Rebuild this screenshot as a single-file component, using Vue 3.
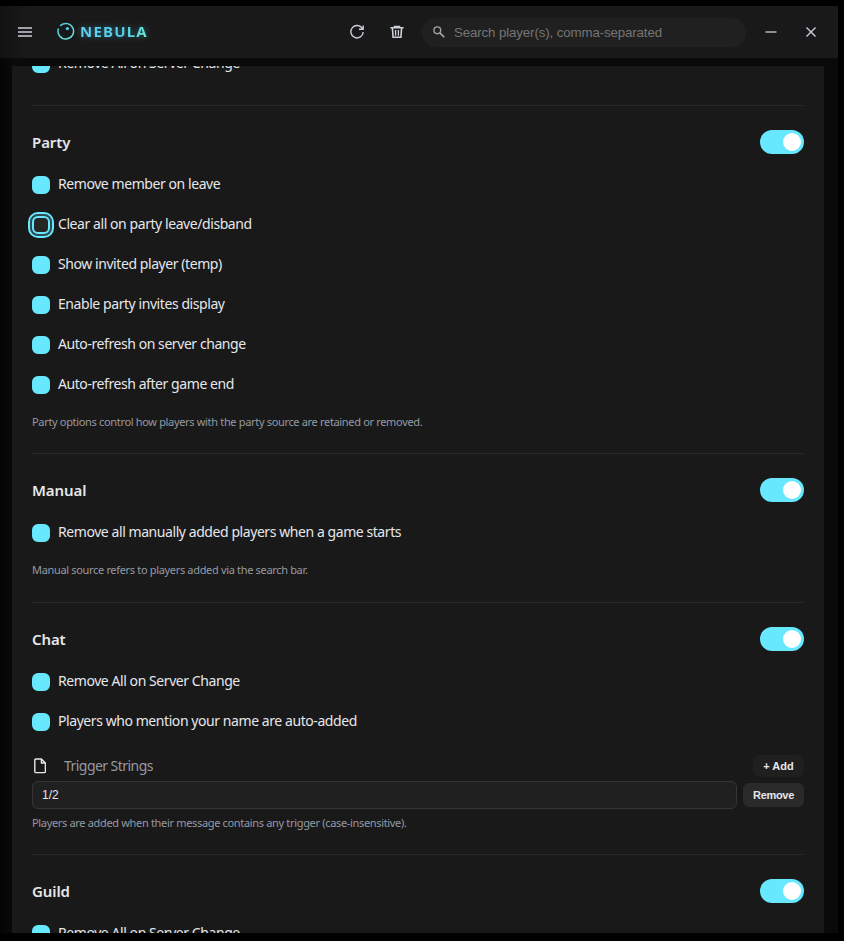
<template>
  <div class="window">
    <header class="titlebar">
      <button class="icon-btn menu-btn" type="button" aria-label="Menu">
        <svg width="14" height="10" viewBox="0 0 14 10">
          <path d="M0 1h14M0 5h14M0 9h14" stroke="currentColor" stroke-width="1.7" />
        </svg>
      </button>

      <div class="brand">
        <svg class="brand-logo" width="18" height="18" viewBox="0 0 18 18" fill="none">
          <defs>
            <linearGradient id="logo-gradient" x1="0" y1="0" x2="1" y2="1">
              <stop offset="0" stop-color="#4fc3e8" />
              <stop offset="1" stop-color="#6ee7d8" />
            </linearGradient>
          </defs>
          <path
            d="M3.6 3.4A7.8 7.8 0 1 1 1.3 7"
            stroke="url(#logo-gradient)"
            stroke-width="1.5"
            stroke-linecap="round"
          />
          <circle cx="10.4" cy="6.6" r="1.7" fill="#4fc3e8" />
        </svg>
        <span class="brand-name">NEBULA</span>
      </div>

      <button class="icon-btn refresh-btn" type="button" aria-label="Refresh">
        <svg width="16" height="16" viewBox="0 0 16 16" fill="none" stroke="currentColor">
          <path
            d="M13.6 5A6.2 6.2 0 1 0 14.2 8M14.2 1.6V5.3H10"
            stroke-width="1.4"
            stroke-linejoin="round"
          />
        </svg>
      </button>
      <button class="icon-btn trash-btn" type="button" aria-label="Clear">
        <svg width="14" height="14" viewBox="0 0 14 14" fill="none" stroke="currentColor">
          <path d="M.4 2.8h13.2M4.6 2.6V1.5h4.8v1.1M2.4 3l.7 9.3h7.8l.7-9.3" stroke-width="1.6" />
          <path d="M5.6 5v5.8M8.4 5v5.8" stroke-width="1.3" />
        </svg>
      </button>

      <label class="search">
        <svg width="12" height="12" viewBox="0 0 12 12" fill="none" stroke="currentColor">
          <circle cx="4.3" cy="4.3" r="3.4" stroke-width="1.4" />
          <path d="M6.9 6.9L11.2 11.2" stroke-width="1.7" />
        </svg>
        <input v-model="search" type="text" placeholder="Search player(s), comma-separated" />
      </label>

      <button class="icon-btn minimize-btn" type="button" aria-label="Minimize">
        <svg width="12" height="12" viewBox="0 0 12 12">
          <path d="M.5 6h11" stroke="currentColor" stroke-width="1.8" />
        </svg>
      </button>
      <button class="icon-btn close-btn" type="button" aria-label="Close">
        <svg width="10" height="10" viewBox="0 0 10 10">
          <path d="M.5 .5l9 9M9.5 .5l-9 9" stroke="currentColor" stroke-width="1.4" />
        </svg>
      </button>
    </header>

    <main class="panel">
      <section v-for="section in sections" :key="section.id" class="section">
        <div v-if="section.title" class="section-head">
          <h3>{{ section.title }}</h3>
          <button
            class="toggle"
            :class="{ on: section.enabled }"
            type="button"
            role="switch"
            :aria-checked="section.enabled"
            :aria-label="section.title"
            @click="section.enabled = !section.enabled"
          >
            <span class="toggle-knob"></span>
          </button>
        </div>

        <label v-for="option in section.options" :key="option.label" class="option">
          <input
            v-model="option.checked"
            type="checkbox"
            :class="{ focused: focusedOption === option.label }"
            @focus="focusedOption = option.label"
            @blur="focusedOption = ''"
          />
          <span>{{ option.label }}</span>
        </label>

        <div v-if="section.triggers" class="triggers">
          <div class="triggers-head">
            <svg width="12" height="16" viewBox="0 0 12 16" fill="none" stroke="currentColor">
              <path
                d="M7.4 1H2Q.8 1 .8 2.2V13.4Q.8 14.6 2 14.6H10.2Q11.4 14.6 11.4 13.4V5L7.4 1V5H11.4"
                stroke-width="1.4"
                stroke-linejoin="round"
              />
            </svg>
            <span class="triggers-title">Trigger Strings</span>
            <button class="small-btn add-btn" type="button" @click="section.triggers.push('')">
              + Add
            </button>
          </div>
          <div v-for="(trigger, index) in section.triggers" :key="index" class="trigger-row">
            <input v-model="section.triggers[index]" type="text" />
            <button
              class="small-btn remove-btn"
              type="button"
              @click="section.triggers.splice(index, 1)"
            >
              Remove
            </button>
          </div>
        </div>

        <p v-if="section.note" class="note">{{ section.note }}</p>
      </section>
    </main>
  </div>
</template>

<script setup>
import { ref } from 'vue'

const search = ref('')
const focusedOption = ref('Clear all on party leave/disband')

const sections = ref([
  {
    id: 'server',
    options: [{ label: 'Remove All on Server Change', checked: true }],
  },
  {
    id: 'party',
    title: 'Party',
    enabled: true,
    options: [
      { label: 'Remove member on leave', checked: true },
      { label: 'Clear all on party leave/disband', checked: false },
      { label: 'Show invited player (temp)', checked: true },
      { label: 'Enable party invites display', checked: true },
      { label: 'Auto-refresh on server change', checked: true },
      { label: 'Auto-refresh after game end', checked: true },
    ],
    note: 'Party options control how players with the party source are retained or removed.',
  },
  {
    id: 'manual',
    title: 'Manual',
    enabled: true,
    options: [{ label: 'Remove all manually added players when a game starts', checked: true }],
    note: 'Manual source refers to players added via the search bar.',
  },
  {
    id: 'chat',
    title: 'Chat',
    enabled: true,
    options: [
      { label: 'Remove All on Server Change', checked: true },
      { label: 'Players who mention your name are auto-added', checked: true },
    ],
    triggers: ['1/2'],
    note: 'Players are added when their message contains any trigger (case-insensitive).',
  },
  {
    id: 'guild',
    title: 'Guild',
    enabled: true,
    options: [{ label: 'Remove All on Server Change', checked: true }],
  },
])
</script>

<style>
body {
  background: #000;
}
</style>

<style scoped>
.window {
  box-sizing: border-box;
  width: 838px;
  height: 933px;
  border-top: 6px solid #000;
  background: linear-gradient(to right, #040404, #0a0a0a 14px);
  display: flex;
  flex-direction: column;
  font-family: 'Noto Sans', sans-serif;
  color: #e5e7eb;
  overflow: hidden;
}

button,
input {
  font-family: inherit;
  border: none;
  outline: none;
  margin: 0;
  padding: 0;
}

.titlebar {
  display: flex;
  align-items: center;
  flex: none;
  height: 52px;
  background: linear-gradient(to right, #121212, #191919 28px);
}

.icon-btn {
  display: flex;
  align-items: center;
  justify-content: center;
  flex: none;
  width: 32px;
  height: 32px;
  background: none;
  color: #cbd0da;
  cursor: pointer;
}

.menu-btn {
  margin-left: 9px;
}

.brand {
  display: flex;
  align-items: center;
  gap: 5px;
  margin-left: 16px;
  width: 284px;
}

.brand-logo {
  margin-bottom: 3px;
  flex: none;
}

.brand-name {
  margin-bottom: 2px;
  font-size: 15px;
  line-height: 20px;
  font-weight: 700;
  letter-spacing: 1.2px;
  background: linear-gradient(90deg, #62d0f2, #55cdea 65%, #6ee7d0);
  background-clip: text;
  -webkit-background-clip: text;
  color: transparent;
  filter: drop-shadow(0 0 3px rgba(80, 210, 235, 0.45));
}

.trash-btn {
  margin-left: 8px;
}

.search {
  display: flex;
  align-items: center;
  box-sizing: border-box;
  width: 324px;
  height: 29px;
  margin-left: 9px;
  padding-left: 11px;
  gap: 9px;
  border-radius: 14px;
  background: #202020;
  color: #a3a3a3;
}

.search input {
  flex: 1;
  background: none;
  color: #e5e7eb;
  font-family: 'Liberation Sans', sans-serif;
  font-size: 13.33px;
  letter-spacing: -0.14px;
}

.search input::placeholder {
  color: #757575;
}

.minimize-btn {
  margin-left: 9px;
  color: #9a9da5;
}

.close-btn {
  margin-left: 8px;
}

.panel {
  flex: 1;
  min-height: 0;
  margin: 8px 14px 0 12px;
  padding: 0 20px;
  background: #191919;
  overflow: hidden;
}

.section {
  border-top: 1px solid #292929;
  padding-top: 24px;
}

/* The list is scrolled part of the way down */
.section:first-child {
  margin-top: -47px;
  padding-bottom: 21px;
}

.section-head {
  display: flex;
  align-items: center;
  justify-content: space-between;
  height: 24px;
  margin-bottom: 11px;
}

.section-head h3 {
  margin: 0;
  font-size: 15px;
  line-height: 24px;
  font-weight: 600;
  letter-spacing: -0.1px;
}

.toggle {
  width: 44px;
  height: 24px;
  padding: 3px;
  border-radius: 12px;
  background: #333;
  cursor: pointer;
}

.toggle.on {
  background: #67e8ff;
}

.toggle-knob {
  display: block;
  width: 18px;
  height: 18px;
  border-radius: 50%;
  background: #fff;
}

.toggle.on .toggle-knob {
  margin-left: auto;
}

.option {
  display: flex;
  align-items: center;
  gap: 8px;
  height: 40px;
  font-size: 14px;
  line-height: 20px;
  white-space: nowrap;
  cursor: pointer;
}

.option span {
  padding-bottom: 2px;
  letter-spacing: -0.43px;
}

.option input {
  appearance: none;
  box-sizing: border-box;
  width: 18px;
  height: 18px;
  border: 2px solid #67e8ff;
  border-radius: 6px;
  background: #262626;
}

.option input:checked {
  background: #67e8ff;
}

.option input.focused {
  outline: 2px solid #67e8ff;
  outline-offset: 2px;
  box-shadow: 0 0 0 2px rgba(103, 232, 255, 0.25);
}

.note {
  height: 40.4px;
  margin: 0;
  padding-top: 8px;
  font-size: 11px;
  line-height: 18px;
  color: #9699a3;
  letter-spacing: -0.33px;
  white-space: nowrap;
}

.triggers {
  padding-top: 13px;
}

.triggers-head {
  display: flex;
  align-items: center;
  height: 22px;
  padding-left: 2px;
  margin-bottom: 4px;
}

.triggers-title {
  flex: 1;
  margin-left: 18px;
  font-size: 14px;
  line-height: 20px;
  letter-spacing: -0.55px;
  color: #9699a3;
}

.small-btn {
  border-radius: 6px;
  font-family: 'Liberation Sans', sans-serif;
  font-size: 11px;
  font-weight: 600;
  color: #e5e7eb;
  cursor: pointer;
}

.add-btn {
  width: 51px;
  height: 22px;
  background: #1f1f1f;
}

.remove-btn {
  width: 61px;
  height: 24px;
  background: #2a2a2a;
  letter-spacing: -0.3px;
}

.trigger-row {
  display: flex;
  align-items: center;
  gap: 6px;
}

.trigger-row input {
  flex: 1;
  box-sizing: border-box;
  height: 28px;
  padding: 0 9px;
  border: 1px solid #363636;
  border-radius: 6px;
  background: #202020;
  color: #e5e7eb;
  font-family: 'Liberation Sans', sans-serif;
  font-size: 12px;
}

.triggers + .note {
  height: 40px;
  padding-top: 5px;
}
</style>
